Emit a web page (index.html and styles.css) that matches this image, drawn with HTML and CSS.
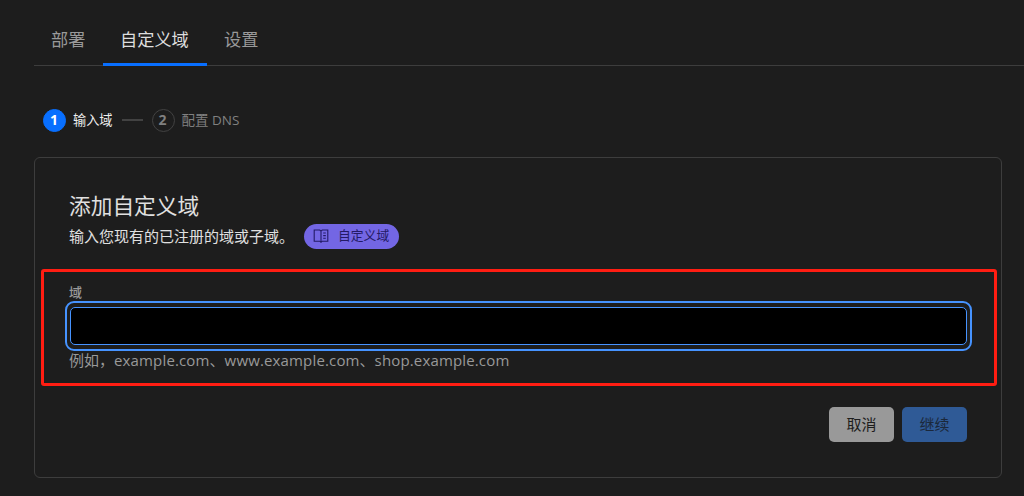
FILE: index.html
```html
<!DOCTYPE html>
<html lang="zh-CN">
<head>
<meta charset="utf-8">
<title>自定义域</title>
<link rel="stylesheet" href="styles.css">
</head>
<body>
<nav class="tabs">
  <a class="tab">部署</a>
  <a class="tab active">自定义域</a>
  <a class="tab">设置</a>
</nav>
<ol class="steps">
  <li class="step current"><span class="num">1</span><span>输入域</span></li>
  <li class="line"></li>
  <li class="step"><span class="num">2</span><span class="pending">配置 DNS</span></li>
</ol>
<main class="card">
  <h1 class="title">添加自定义域</h1>
  <div class="intro">
    <span class="description">输入您现有的已注册的域或子域。</span>
    <a class="badge">
      <svg class="book" viewBox="0 0 16 16" fill="none" stroke="currentColor" stroke-width="1.1"><path d="M8 3.1 6.8 2H1.2v11.2h5.5L8 14.3l1.3-1.1h5.5V2H9.2zM8 3v11M10.2 5h2.6M10.2 7.6h2.6M10.2 10.2h2.6"/></svg>
      <span class="badge-text">自定义域</span>
    </a>
  </div>
  <section class="field">
    <label class="label" for="domain">域</label>
    <div class="ring"><input class="input" id="domain" type="text"></div>
    <p class="hint">例如，<span class="host">example.com</span>、<span class="host">www.example.com</span>、<span class="host">shop.example.com</span></p>
    <div class="highlight"></div>
  </section>
  <div class="actions">
    <button class="button cancel">取消</button>
    <button class="button next">继续</button>
  </div>
</main>
</body>
</html>
```
FILE: styles.css
```css
* { box-sizing: border-box; }
body {
  margin: 0;
  height: 496px;
  overflow: hidden;
  background: #1d1d1d;
  color: #e0e0e0;
  font: 15px/20px "Open Sans", "Noto Sans CJK SC", sans-serif;
}
.tabs {
  display: flex;
  height: 66px;
  margin-left: 34px;
  padding-top: 14px;
  border-bottom: 1px solid #3d3d3d;
}
.tab {
  height: 52px;
  padding: 0 17px;
  font-size: 17.2px;
  line-height: 51px;
  color: #999;
}
.tab.active {
  width: 104px;
  border-bottom: 3px solid #086fff;
  color: #dedede;
}
.tab:first-child { width: 69px; }
.steps {
  display: flex;
  align-items: center;
  height: 24px;
  margin: 42px 0 0 43px;
  padding: 0;
  list-style: none;
  font-size: 13.2px;
}
.step { display: flex; align-items: center; gap: 7px; color: #808080; }
.step.current { color: #eee; }
.num {
  width: 23px;
  height: 23px;
  padding-right: 1px;
  border: 1px solid #424242;
  border-radius: 50%;
  font-size: 14px;
  font-weight: 700;
  line-height: 20px;
  text-align: center;
}
.current .num { border-color: #086fff; background: #086fff; color: #fff; }
.line { width: 21px; height: 2px; margin: 0 9px; background: #424242; }
.pending { font-size: 13.5px; }
.card {
  width: 968px;
  height: 321px;
  margin: 25px 0 0 34px;
  padding: 33px 34px;
  border: 1px solid #3d3d3d;
  border-radius: 6px;
}
.title {
  margin: 0;
  font-size: 21.7px;
  font-weight: 400;
  line-height: 30px;
}
.intro { display: flex; align-items: center; gap: 10px; height: 30px; }
.description { width: 225px; white-space: nowrap; }
.badge {
  display: flex;
  align-items: center;
  gap: 9px;
  width: 95px;
  height: 25px;
  padding-left: 9px;
  border-radius: 13px;
  background: #7366e4;
  color: #231a66;
  font-size: 12.8px;
}
.book { width: 16px; height: 16px; }
.badge-text { padding-bottom: 2px; }
.field { position: relative; height: 118px; margin-top: 18px; padding-top: 14px; }
.label { display: block; height: 18px; color: #999; font-size: 13px; font-weight: 500; line-height: 18px; }
.ring {
  width: 907px;
  height: 50px;
  margin-left: -4px;
  padding: 4px 3px;
  border: 2px solid #4693ff;
  border-radius: 9px;
}
.input {
  display: block;
  width: 100%;
  height: 38px;
  border: 1px solid #4693ff;
  border-radius: 5px;
  outline: 0;
  background: #000;
  color: #fff;
}
.hint { margin: 0; color: #999; line-height: 18px; white-space: nowrap; }
.host { letter-spacing: 0.15px; }
.highlight {
  position: absolute;
  top: 0;
  left: -28px;
  width: 956px;
  height: 117px;
  border: 3px solid #ff1d12;
  border-radius: 3px;
  pointer-events: none;
}
.actions { display: flex; justify-content: flex-end; gap: 8px; margin-top: 20px; }
.button {
  width: 65px;
  height: 35px;
  padding: 0 0 2px;
  border: 0;
  border-radius: 5px;
  font: inherit;
}
.cancel { background: #999; color: #1d1d1d; }
.next { background: #2f5a96; color: #1b283b; }
```
